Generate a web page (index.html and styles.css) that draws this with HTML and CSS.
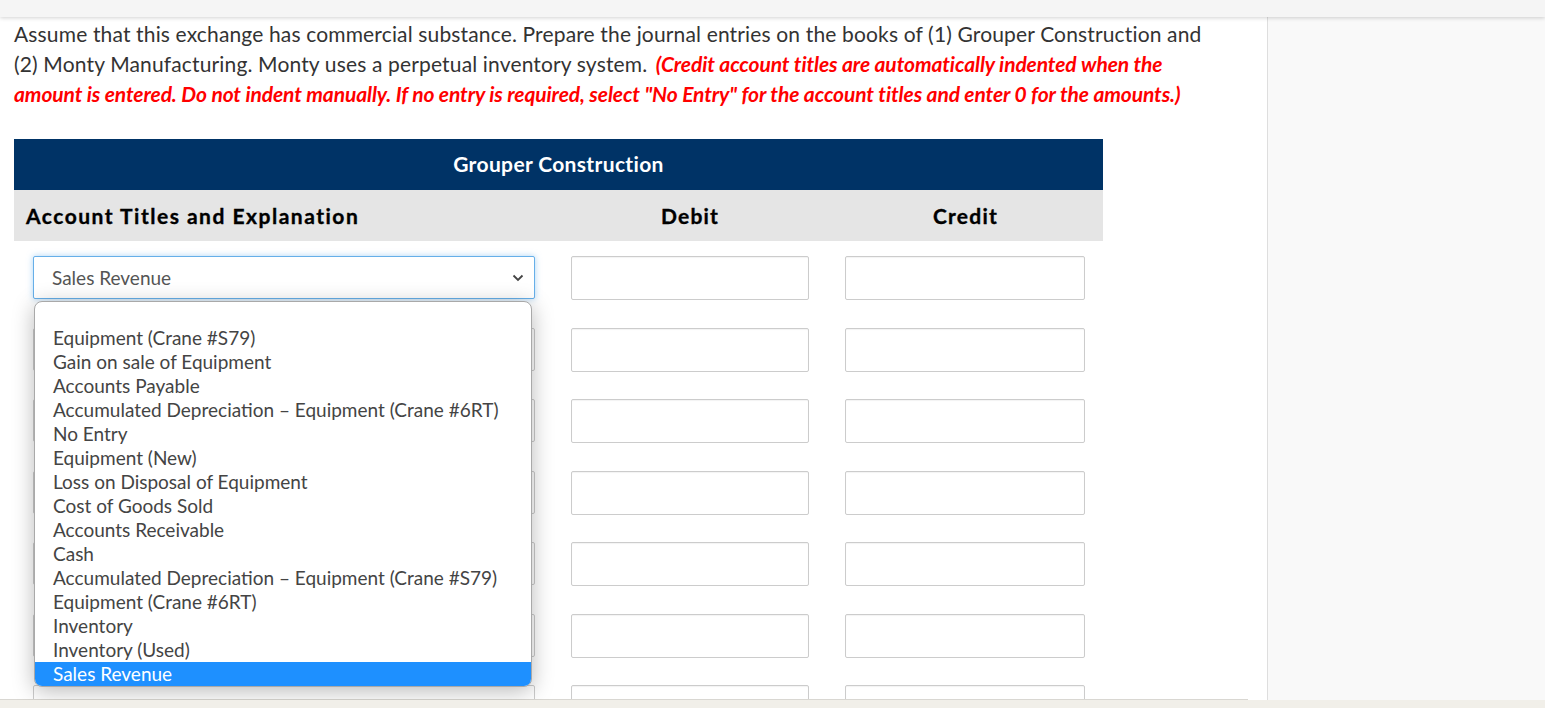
FILE: index.html
```html
<!DOCTYPE html>
<html lang="en">
<head>
<meta charset="utf-8">
<title>Journal Entries</title>
<link rel="stylesheet" href="styles.css">
</head>
<body>
<div class="topbar"></div>
<div class="layout">
  <main class="main">
    <p class="intro">Assume that this exchange has commercial substance. Prepare the journal entries on the books of (1) Grouper Construction and (2) Monty Manufacturing. Monty uses a perpetual inventory system. <em class="warn">(Credit account titles are automatically indented when the amount is entered. Do not indent manually. If no entry is required, select "No Entry" for the account titles and enter 0 for the amounts.)</em></p>

    <div class="journal">
      <div class="journal-title">Grouper Construction</div>
      <div class="journal-head">
        <div class="col-account">Account Titles and Explanation</div>
        <div class="col-amount">Debit</div>
        <div class="col-amount">Credit</div>
      </div>

      <div class="journal-row">
        <div class="cell-account">
          <div class="select-wrap">
            <div class="select focused">
              <span>Sales Revenue</span>
              <svg class="chev" width="12" height="8" viewBox="0 0 12 8"><path d="M1.5 1.5 L6 6 L10.5 1.5" fill="none" stroke="#444" stroke-width="1.8"/></svg>
            </div>
            <ul class="menu">
              <li class="blank">&nbsp;</li>
              <li>Equipment (Crane #S79)</li>
              <li>Gain on sale of Equipment</li>
              <li>Accounts Payable</li>
              <li>Accumulated Depreciation – Equipment (Crane #6RT)</li>
              <li>No Entry</li>
              <li>Equipment (New)</li>
              <li>Loss on Disposal of Equipment</li>
              <li>Cost of Goods Sold</li>
              <li>Accounts Receivable</li>
              <li>Cash</li>
              <li>Accumulated Depreciation – Equipment (Crane #S79)</li>
              <li>Equipment (Crane #6RT)</li>
              <li>Inventory</li>
              <li>Inventory (Used)</li>
              <li class="selected">Sales Revenue</li>
            </ul>
          </div>
        </div>
        <div class="cell-amount"><div class="input"></div></div>
        <div class="cell-amount"><div class="input"></div></div>
      </div>

      <div class="journal-row">
        <div class="cell-account"><div class="select"></div></div>
        <div class="cell-amount"><div class="input"></div></div>
        <div class="cell-amount"><div class="input"></div></div>
      </div>
      <div class="journal-row">
        <div class="cell-account"><div class="select"></div></div>
        <div class="cell-amount"><div class="input"></div></div>
        <div class="cell-amount"><div class="input"></div></div>
      </div>
      <div class="journal-row">
        <div class="cell-account"><div class="select"></div></div>
        <div class="cell-amount"><div class="input"></div></div>
        <div class="cell-amount"><div class="input"></div></div>
      </div>
      <div class="journal-row">
        <div class="cell-account"><div class="select"></div></div>
        <div class="cell-amount"><div class="input"></div></div>
        <div class="cell-amount"><div class="input"></div></div>
      </div>
      <div class="journal-row">
        <div class="cell-account"><div class="select"></div></div>
        <div class="cell-amount"><div class="input"></div></div>
        <div class="cell-amount"><div class="input"></div></div>
      </div>
      <div class="journal-row">
        <div class="cell-account"><div class="select"></div></div>
        <div class="cell-amount"><div class="input"></div></div>
        <div class="cell-amount"><div class="input"></div></div>
      </div>
    </div>
    <div class="hscroll"></div>
  </main>
  <aside class="side"></aside>
</div>
<div class="footer"></div>
</body>
</html>
```

FILE: styles.css
```css
* { box-sizing: border-box; }

html, body {
  margin: 0;
  padding: 0;
  height: 708px;
  overflow: hidden;
}

body {
  font-family: Lato, "Open Sans", "Liberation Sans", sans-serif;
  color: #333;
  background: #ffffff;
  display: flex;
  flex-direction: column;
}

.topbar {
  height: 17px;
  flex: 0 0 17px;
  background: #f5f5f5;
  box-shadow: 0 1px 4px rgba(0, 0, 0, 0.18);
  position: relative;
  z-index: 3;
}

.layout {
  flex: 1 1 auto;
  display: flex;
  min-height: 0;
}

.main {
  width: 1267px;
  flex: 0 0 1267px;
  background: #fff;
  padding: 2px 0 0 14px;
  overflow: hidden;
  position: relative;
}

.side {
  flex: 1 1 auto;
  background: #f9f9f9;
  border-left: 1px solid #dedede;
  margin-top: -4px;
}

.footer {
  height: 8px;
  flex: 0 0 8px;
  background: #f1efe9;
}

.hscroll {
  position: absolute;
  left: 0;
  bottom: 0;
  width: 1248px;
  height: 1px;
  background: #d9d7d2;
}

.intro {
  margin: 0;
  width: 1215px;
  font-size: 21px;
  line-height: 30px;
  letter-spacing: 0.15px;
  color: #333;
}

.warn {
  color: #ff0000;
  font-weight: 700;
  font-style: italic;
  letter-spacing: -0.1px;
  padding-left: 3px;
}

.journal {
  margin-top: 30px;
  width: 1089px;
}

.journal-title {
  height: 51px;
  background: #003366;
  color: #fff;
  font-weight: 700;
  font-size: 21px;
  letter-spacing: 0.35px;
  display: flex;
  align-items: center;
  justify-content: center;
  padding-bottom: 3px;
}

.journal-head,
.journal-row {
  display: grid;
  grid-template-columns: 538px 276px 275px;
}

.journal-head {
  height: 51px;
  background: #e5e5e5;
  color: #000;
  font-weight: 700;
  font-size: 21px;
  letter-spacing: 1.2px;
  -webkit-text-stroke: 0.35px #000;
  align-items: center;
}

.col-account {
  padding-left: 12px;
  letter-spacing: 1.5px;
}

.col-amount {
  text-align: center;
}

.journal-row {
  height: 71.5px;
  padding-top: 15px;
}

.cell-account {
  padding: 0 17px 0 19px;
}

.cell-amount {
  padding: 0 19px;
}

.cell-amount:last-child {
  padding: 0 18px 0 17px;
}

.input {
  height: 44px;
  border: 1px solid #cccccc;
  border-radius: 2px;
  background: #fff;
  box-shadow: inset 0 1px 1px rgba(0, 0, 0, 0.05);
}

.select-wrap {
  position: relative;
}

.select {
  height: 43px;
  border: 1px solid #cccccc;
  border-radius: 2px;
  background: #fff;
  display: flex;
  align-items: center;
  justify-content: space-between;
  padding: 0 10px 0 18px;
  font-size: 19px;
  color: #555;
}

.select.focused {
  border-color: #66afe9;
  box-shadow: 0 0 6px rgba(102, 175, 233, 0.55);
}

.chev {
  display: block;
}

.menu {
  position: absolute;
  top: 45px;
  left: 1px;
  width: 498px;
  margin: 0;
  padding: 0;
  list-style: none;
  background: #fff;
  border: 1px solid #a9a9a9;
  border-radius: 8px;
  overflow: hidden;
  box-shadow: 0 4px 22px rgba(0, 0, 0, 0.28);
  z-index: 2;
}

.menu li {
  height: 24px;
  line-height: 24px;
  padding-left: 18px;
  font-size: 19px;
  color: #444;
  white-space: nowrap;
}

.menu li.selected {
  background: #1e90ff;
  color: #fff;
}
```
